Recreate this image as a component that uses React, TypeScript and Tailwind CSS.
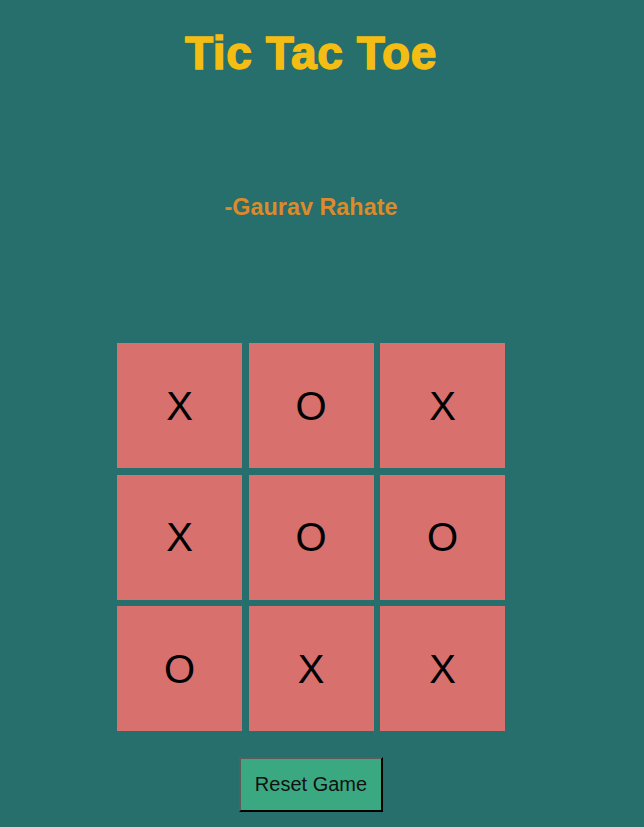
const board = ["X", "O", "X", "X", "O", "O", "O", "X", "X"];

export default function App() {
  return (
    <div className="min-h-[827px] w-full bg-[#276f6c] font-['Liberation_Sans',Arial,sans-serif]">
      <div className="flex w-[622px] flex-col items-center pt-[30px]">
        <h1 className="text-[46px] font-black leading-[46px] tracking-[0.6px] text-[#f4bd14] [-webkit-text-stroke:1.4px_#f4bd14]">
          Tic Tac Toe
        </h1>

        <h3 className="mt-[120px] text-[23.4px] font-bold leading-[23px] text-[#dc8a2a]">
          -Gaurav Rahate
        </h3>

        <div className="mt-[124px] grid grid-cols-[125px_125px_125px] gap-[6.5px]">
          {board.map((v, i) => (
            <div
              key={i}
              className="flex h-[125px] w-[125px] items-center justify-center bg-[#d8706e] text-[40px] text-black"
            >
              {v}
            </div>
          ))}
        </div>

        <button className="mt-[26px] border-2 border-t-[#5c5c5c] border-l-[#5c5c5c] border-r-black border-b-black bg-[#3aa981] px-[14px] py-[14px] text-[20px] leading-[23px] text-[#111]">
          Reset Game
        </button>
      </div>
    </div>
  );
}
